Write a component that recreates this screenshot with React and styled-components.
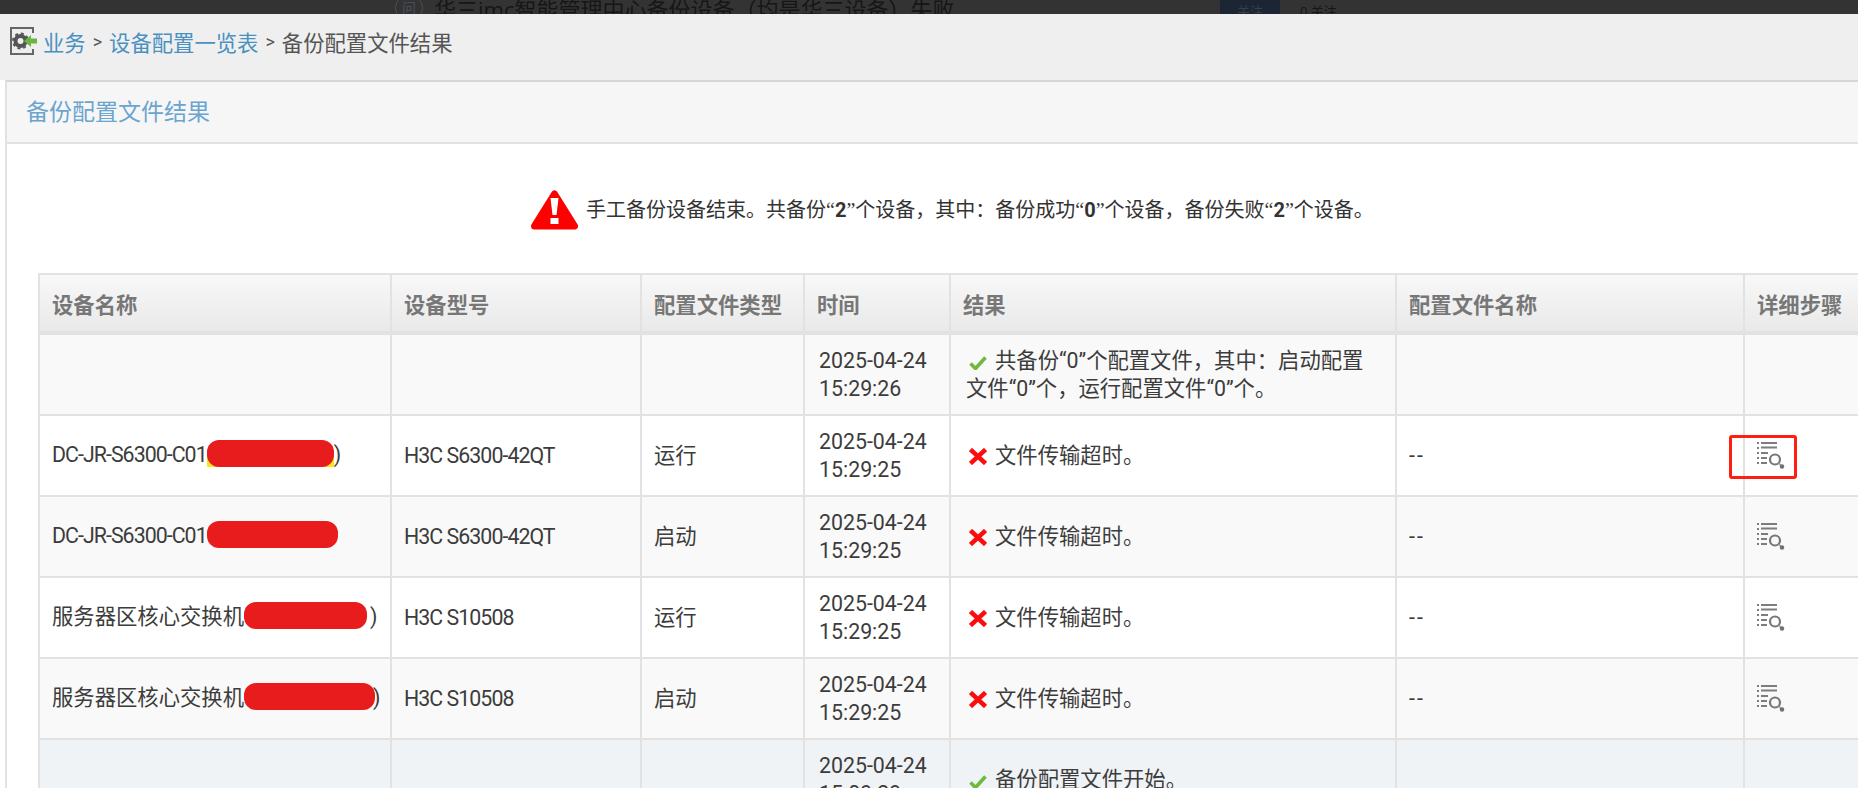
import React from 'react'
import styled, { createGlobalStyle } from 'styled-components'

const Global = createGlobalStyle`
html, body { margin: 0; padding: 0; background: #fff; overflow: hidden; }
body { font-family: Roboto, "Noto Sans CJK SC", sans-serif; }
`;

const Page = styled.div`
width: 1858px;
height: 788px;
overflow: hidden;
`;
const TopBar = styled.div`
height: 14px;
background: #333;
overflow: hidden;
display: flex;
align-items: flex-start;
padding-left: 395px;
color: #161616;
font-family: "Open Sans", "Noto Sans CJK SC", sans-serif;
font-size: 22px;
line-height: 22px;
`;
const Question = styled.span`
width: 26px;
height: 26px;
margin: -6px 11px 0 0;
border: 1px solid #46505c;
border-radius: 50%;
flex: none;
font-size: 14px;
line-height: 26px;
text-align: center;
color: #46505c;
`;
const TopTitle = styled.span`
width: 556px;
margin-top: -2px;
white-space: nowrap;
flex: none;
`;
const FollowButton = styled.span`
width: 60px;
height: 14px;
margin-left: 230px;
background: #1c2533;
color: #3a3f46;
font-size: 13px;
line-height: 22px;
text-align: center;
flex: none;
`;
const FollowText = styled.span`
margin-left: 20px;
font-size: 13px;
line-height: 22px;
`;
const Crumbs = styled.div`
height: 66px;
box-sizing: border-box;
background: #efefef;
display: flex;
align-items: center;
padding: 0 0 12px 10px;
font-size: 21.33px;
color: #555;
`;
const CrumbIcon = styled.svg`
margin-right: 6px;
`;
const CrumbLink = styled.a`
color: #4a90c0;
`;
const Sep = styled.span`
color: #555;
font-size: 18px;
margin: 0 7px;
`;
const Panel = styled.div`
margin-left: 5px;
border-top: 2px solid #d6d6d6;
border-left: 2px solid #e2e2e2;
background: #fff;
height: 708px;
`;
const PanelHead = styled.div`
height: 56px;
display: flex;
align-items: center;
padding: 0 0 4px 19px;
background: #f6f6f6;
border-bottom: 2px solid #e2e2e2;
color: #6ba5cf;
font-size: 23px;
`;
const Notice = styled.div`
height: 129px;
box-sizing: border-box;
display: flex;
align-items: center;
padding: 3px 0 0 524px;
gap: 8px;
color: #333;
font-family: "Liberation Serif", "Noto Sans CJK SC", serif;
font-size: 20px;
white-space: nowrap;
`;
const NoticeText = styled.span`
margin-bottom: 4px;
`;
const Count = styled.b`
font-family: Roboto, sans-serif;
font-weight: bold;
`;
const Table = styled.table`
margin-left: 31px;
width: 1900px;
border-collapse: collapse;
table-layout: fixed;
font-size: 21.33px;
color: #3c3c3c;
`;
const Th = styled.th`
height: 56px;
padding: 0 0 0 12px;
text-align: left;
font-size: 21.33px;
font-weight: bold;
color: #777;
background: linear-gradient(#f8f8f8, #e9e9e9);
border: 2px solid #e2e2e2;
border-bottom-width: 4px;
`;
const Row = styled.tr`
background: ${(p) => p.$bg};
`;
const Td = styled.td`
height: 79px;
padding: 0 0 0 ${(p) => p.$pad || 12}px;
border: 2px solid #e2e2e2;
line-height: 28px;
vertical-align: middle;
white-space: ${(p) => (p.$wrap ? 'normal' : 'nowrap')};
`;
const Latin = styled.span`
letter-spacing: -0.95px;
`;
const Dashes = styled.span`
letter-spacing: 2px;
`;
const Result = styled.div`
padding: 0 24px 0 3px;
`;
const Blotted = styled.span`
position: relative;
display: inline-block;
width: ${(p) => p.$w}px;
height: 27px;
margin-right: ${(p) => p.$gap || 0}px;
vertical-align: middle;
background: ${(p) => (p.$mark ? 'linear-gradient(transparent 50%, #f5e91c 50%, #f5e91c 89%, transparent 89%)' : 'transparent')};
`;
const Blot = styled.span`
position: absolute;
left: 0;
right: 0;
top: -3px;
height: 27px;
border-radius: 12px;
background: #e81c1c;
`;
const DetailCell = styled.div`
position: relative;
`;
const Highlight = styled.span`
position: absolute;
left: -28px;
top: -7px;
width: 68px;
height: 44px;
border: 3px solid #ff1f10;
border-radius: 3px;
box-sizing: border-box;
`;
const Mark = styled.svg`
vertical-align: -2px;
margin: 0 8px 0 3px;
`;

const GearIcon = () => (
  <CrumbIcon width="27" height="28" viewBox="0 0 27 28">
    <path d="M23 6V1H1v26h22v-5" fill="#eee" stroke="#666" strokeWidth="2" />
    <circle cx="10.5" cy="14" r="5" fill="none" stroke="#555" strokeWidth="4" />
    <circle cx="10.5" cy="14" r="7.5" fill="none" stroke="#555" strokeWidth="2" strokeDasharray="3 2.9" />
    <path d="M14 14l7-6v3.5h6v5h-6v3.500z" fill="#6db33f" />
  </CrumbIcon>
);
const AlertIcon = () => (
  <svg width="47" height="40" viewBox="0 0 47 40">
    <path d="M23.500 4 L43.500 36 H3.500 Z" fill="#fd0000" stroke="#fd0000" strokeWidth="7" strokeLinejoin="round" />
    <path d="M19.500 8h8l-2 17h-4z" fill="#fff" />
    <rect x="19.500" y="28" width="8" height="6" fill="#fff" />
  </svg>
);
const Check = () => (
  <Mark width="18" height="14" viewBox="0 0 18 14">
    <path d="M1.500 7.500l5 5L16.500 1.500" fill="none" stroke="#6fb93f" strokeWidth="3.600" />
  </Mark>
);
const Cross = () => (
  <Mark width="18" height="17" viewBox="0 0 18 17">
    <path d="M1.500 1.500l15 14M16.500 1.500l-15 14" fill="none" stroke="#fb0d0d" strokeWidth="4.500" />
  </Mark>
);
const DetailIcon = () => (
  <svg width="28" height="27" viewBox="0 0 28 27" style={{ display: 'block' }}>
    <g fill="#7d7d7d">
      <rect x="0" y="0" width="2" height="2" />
      <rect x="0" y="5" width="2" height="2" />
      <rect x="0" y="10" width="2" height="2" />
      <rect x="0" y="15" width="2" height="2" />
      <rect x="0" y="20" width="2" height="2" />
      <rect x="4" y="0" width="16" height="2" />
      <rect x="4" y="4.500" width="16" height="2" />
      <rect x="4" y="10" width="7" height="2" />
      <rect x="4" y="15" width="6" height="2" />
      <rect x="4" y="20" width="6" height="2" />
    </g>
    <circle cx="18" cy="17.500" r="5" fill="none" stroke="#777" strokeWidth="2.200" />
    <path d="M21.500 21l3 3" stroke="#999" strokeWidth="1.500" />
    <circle cx="25" cy="24.500" r="2.200" fill="#6f6f6f" />
  </svg>
);

const columns = [
  { title: '设备名称', width: 352 },
  { title: '设备型号', width: 250 },
  { title: '配置文件类型', width: 163 },
  { title: '时间', width: 146 },
  { title: '结果', width: 446 },
  { title: '配置文件名称', width: 348 },
  { title: '详细步骤', width: 195 },
];

const rows = [
  { time: '15:29:26', ok: true, bg: '#f9f9f9', result: '共备份“0”个配置文件，其中：启动配置文件“0”个，运行配置文件“0”个。' },
  { name: 'DC-JR-S6300-C01', latin: true, tail: ')', blot: 127, mark: true, model: 'H3C S6300-42QT', type: '运行', time: '15:29:25', bg: '#fff', result: '文件传输超时。', file: '--', hl: true },
  { name: 'DC-JR-S6300-C01', latin: true, blot: 131, model: 'H3C S6300-42QT', type: '启动', time: '15:29:25', bg: '#f9f9f9', result: '文件传输超时。', file: '--' },
  { name: '服务器区核心交换机', tail: ')', blot: 123, gap: 3, model: 'H3C S10508', type: '运行', time: '15:29:25', bg: '#fff', result: '文件传输超时。', file: '--' },
  { name: '服务器区核心交换机', tail: ')', blot: 131, gap: -2, model: 'H3C S10508', type: '启动', time: '15:29:25', bg: '#f9f9f9', result: '文件传输超时。', file: '--' },
  { time: '15:09:29', ok: true, bg: '#eff3f6', result: '备份配置文件开始。' },
];

const App = () => {
  return (
    <Page>
      <Global />
      <TopBar>
        <Question>问</Question>
        <TopTitle>华三imc智能管理中心备份设备（均是华三设备）失败</TopTitle>
        <FollowButton>关注</FollowButton>
        <FollowText>0 关注</FollowText>
      </TopBar>
      <Crumbs>
        <GearIcon />
        <CrumbLink>业务</CrumbLink>
        <Sep>&gt;</Sep>
        <CrumbLink>设备配置一览表</CrumbLink>
        <Sep>&gt;</Sep>
        <span>备份配置文件结果</span>
      </Crumbs>
      <Panel>
        <PanelHead>备份配置文件结果</PanelHead>
        <Notice>
          <AlertIcon />
          <NoticeText>
            手工备份设备结束。共备份“<Count>2</Count>”个设备，其中：备份成功“<Count>0</Count>”个设备，备份失败“<Count>2</Count>”个设备。
          </NoticeText>
        </Notice>
        <Table>
          <colgroup>
            {columns.map((c) => <col key={c.title} style={{ width: c.width }} />)}
          </colgroup>
          <thead>
            <tr>
              {columns.map((c) => <Th key={c.title}>{c.title}</Th>)}
            </tr>
          </thead>
          <tbody>
            {rows.map((r, i) => (
              <Row key={i} $bg={r.bg}>
                <Td>
                  {r.latin ? <Latin>{r.name}</Latin> : r.name}
                  {r.blot && <Blotted $w={r.blot} $mark={r.mark} $gap={r.gap}><Blot /></Blotted>}
                  {r.tail}
                </Td>
                <Td><Latin>{r.model}</Latin></Td>
                <Td>{r.type}</Td>
                <Td $pad={14}>2025-04-24<br />{r.time}</Td>
                <Td $wrap>
                  <Result>
                    {r.ok ? <Check /> : <Cross />}
                    {r.result}
                  </Result>
                </Td>
                <Td>{r.file && <Dashes>{r.file}</Dashes>}</Td>
                <Td>
                  {r.file && (
                    <DetailCell>
                      {r.hl && <Highlight />}
                      <DetailIcon />
                    </DetailCell>
                  )}
                </Td>
              </Row>
            ))}
          </tbody>
        </Table>
      </Panel>
    </Page>
  )
}

export default App
